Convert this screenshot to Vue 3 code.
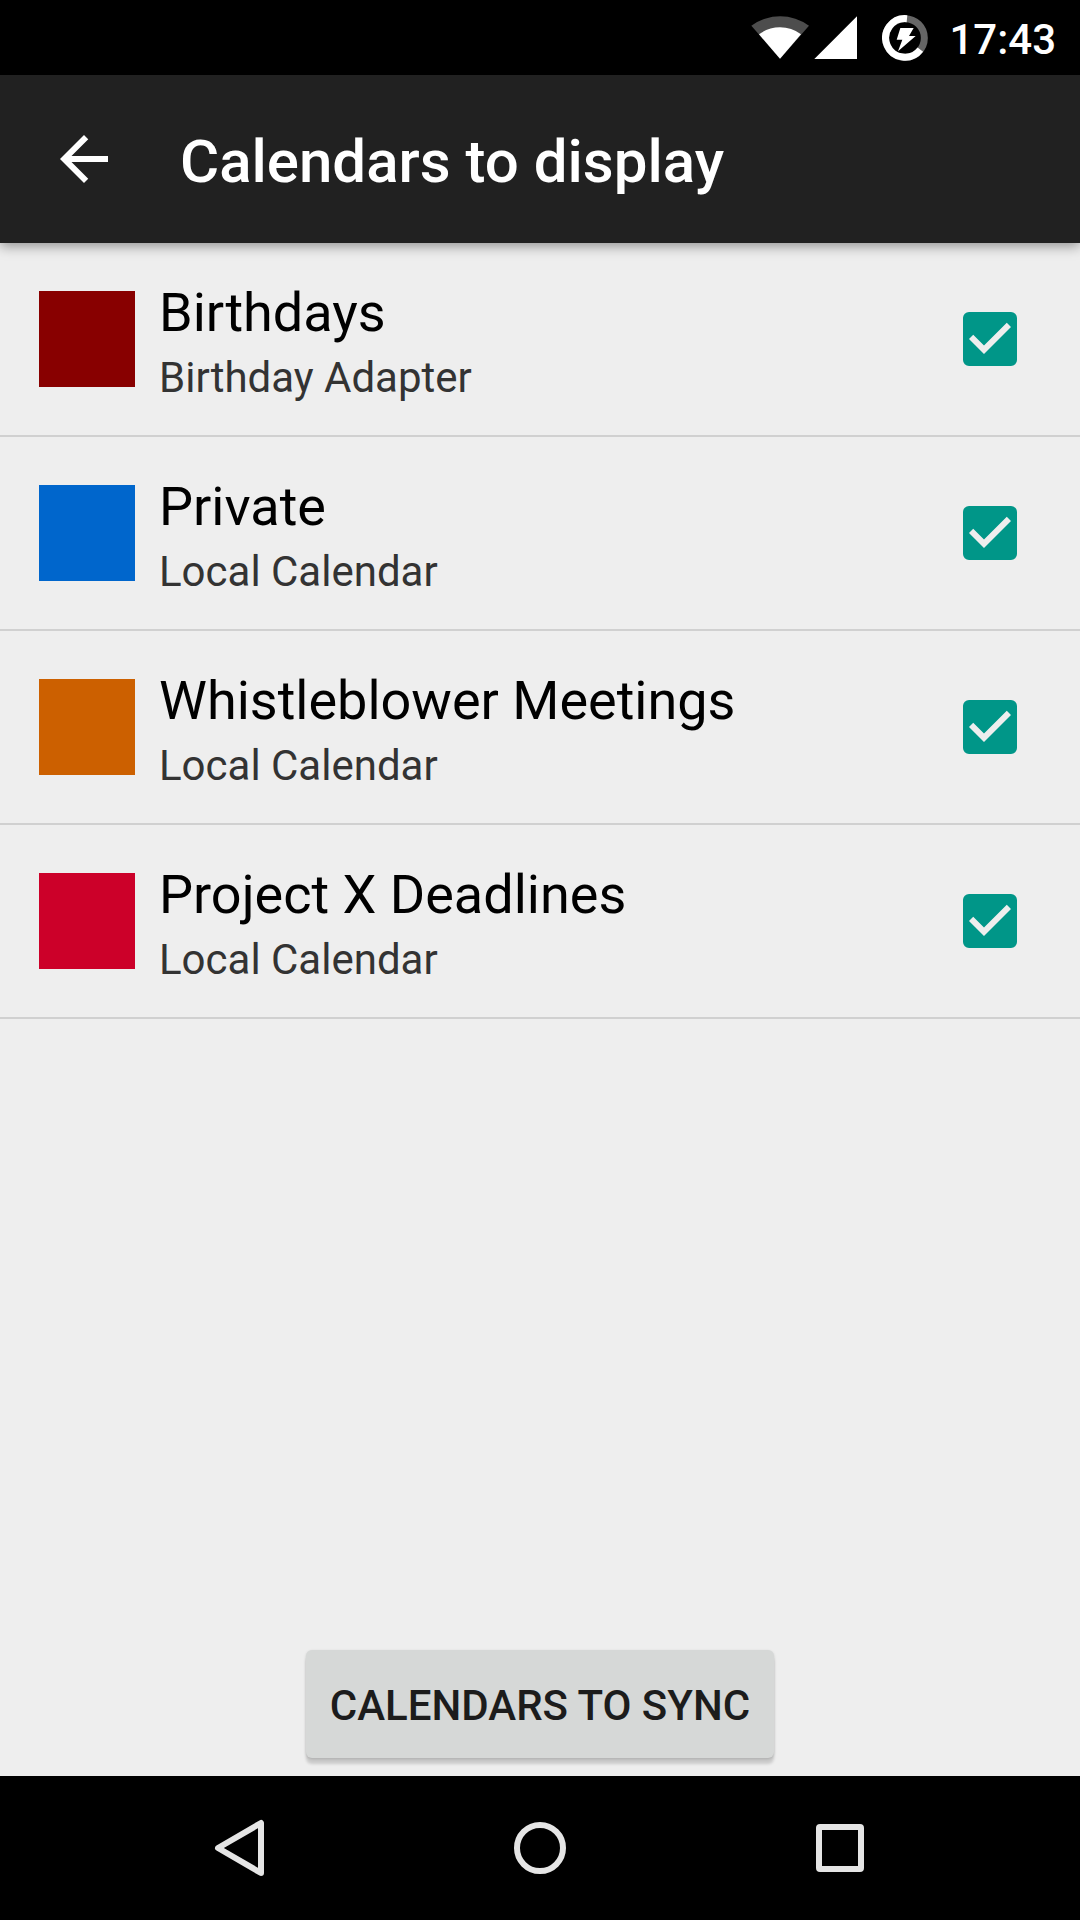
<script setup>
import { ref } from 'vue'

const calendars = ref([
  { id: 1, name: 'Birthdays', account: 'Birthday Adapter', color: '#880000', visible: true },
  { id: 2, name: 'Private', account: 'Local Calendar', color: '#0066cc', visible: true },
  { id: 3, name: 'Whistleblower Meetings', account: 'Local Calendar', color: '#cc6000', visible: true },
  { id: 4, name: 'Project X Deadlines', account: 'Local Calendar', color: '#cc0029', visible: true }
])
</script>

<template>
  <div class="screen">
    <div class="status-bar">
      <svg class="wifi" viewBox="33 48 174 129" aria-hidden="true">
        <path fill="#4d4d4d" d="M120 176L34 77A147 147 0 0 1 207 77Z" />
        <path fill="#fff" d="M120 176L57 103A105 105 0 0 1 183 103Z" />
      </svg>
      <svg class="signal" viewBox="222 48 129 129" aria-hidden="true">
        <path fill="#fff" d="M223 177L351 49V177Z" />
      </svg>
      <svg class="battery" viewBox="426 42 138 138" aria-hidden="true">
        <circle cx="495" cy="111" r="58" fill="none" stroke="#666" stroke-width="21" />
        <path d="M501 53A58 58 0 1 0 541 146" fill="none" stroke="#fff" stroke-width="21" />
        <path fill="#fff" d="M481 81H521L507 105H527L474 151L487 116H470Z" />
      </svg>
      <time class="clock">17:43</time>
    </div>

    <header class="app-bar">
      <button class="back" type="button" aria-label="Back">
        <svg viewBox="0 0 24 24" aria-hidden="true">
          <path fill="#fff" d="M20 11H7.83l5.59-5.59L12 4l-8 8 8 8 1.41-1.41L7.83 13H20v-2z" />
        </svg>
      </button>
      <h1>Calendars to display</h1>
    </header>

    <main class="content">
      <ul class="list">
        <li v-for="cal in calendars" :key="cal.id">
          <label class="row">
            <span class="swatch" :style="{ backgroundColor: cal.color }"></span>
            <span class="text">
              <span class="name">{{ cal.name }}</span>
              <span class="account">{{ cal.account }}</span>
            </span>
            <span class="check">
              <input v-model="cal.visible" type="checkbox" />
              <svg v-if="cal.visible" viewBox="3 3 18 18" aria-hidden="true">
                <path fill="#eee" d="M10 17l-5-5 1.41-1.41L10 14.17l7.59-7.59L19 8l-9 9z" />
              </svg>
            </span>
          </label>
        </li>
      </ul>
      <button class="sync" type="button">CALENDARS TO SYNC</button>
    </main>

    <nav class="nav-bar">
      <button type="button" aria-label="Back">
        <svg viewBox="0 0 72 72" aria-hidden="true">
          <path d="M57 11V61L14 36Z" />
        </svg>
      </button>
      <button type="button" aria-label="Home">
        <svg viewBox="0 0 72 72" aria-hidden="true">
          <circle cx="36" cy="36" r="23" />
        </svg>
      </button>
      <button type="button" aria-label="Recent apps">
        <svg viewBox="0 0 72 72" aria-hidden="true">
          <rect x="15" y="15" width="42" height="42" rx="1" />
        </svg>
      </button>
    </nav>
  </div>
</template>

<style>
body {
  background: #eee;
}
</style>

<style scoped>
.screen {
  display: flex;
  flex-direction: column;
  min-height: 100vh;
  background: #eee;
  font-family: Roboto, "Liberation Sans", sans-serif;
}

button {
  margin: 0;
  padding: 0;
  border: 0;
  background: none;
  font-family: inherit;
  cursor: pointer;
}

svg {
  display: block;
}

.status-bar {
  display: flex;
  align-items: center;
  justify-content: flex-end;
  height: 75px;
  padding-right: 24px;
  background: #000;
}

.wifi {
  width: 58px;
  height: 43px;
}

.signal {
  width: 43px;
  height: 43px;
  margin: 0 25px 0 5px;
}

.battery {
  width: 46px;
  height: 46px;
}

.clock {
  margin-left: 21px;
  padding-top: 4px;
  color: #fff;
  font-size: 42px;
  font-weight: 500;
  line-height: 49px;
}

.app-bar {
  display: flex;
  align-items: center;
  gap: 60px;
  height: 168px;
  padding: 0 48px;
  background: #212121;
  box-shadow: 0 3px 12px rgba(0, 0, 0, 0.4);
}

.back svg {
  width: 72px;
  height: 72px;
}

h1 {
  margin: 0;
  padding-top: 6px;
  color: #fff;
  font-size: 60px;
  font-weight: 500;
  line-height: 70px;
}

.content {
  display: flex;
  flex: 1;
  flex-direction: column;
  align-items: center;
  justify-content: space-between;
  padding-bottom: 18px;
}

.list {
  align-self: stretch;
  margin: 0;
  padding: 0;
  list-style: none;
}

.row {
  display: flex;
  align-items: center;
  gap: 24px;
  height: 192px;
  padding: 0 63px 0 39px;
  border-bottom: 2px solid #d0d0d0;
}

.swatch {
  flex: none;
  width: 96px;
  height: 96px;
}

.text {
  display: flex;
  flex: 1;
  flex-direction: column;
  gap: 9px;
  padding-top: 5px;
}

.name {
  color: #000;
  font-size: 54px;
  line-height: 63px;
}

.account {
  color: #333;
  font-size: 42px;
  line-height: 49px;
}

.check {
  display: grid;
  flex: none;
}

.check input,
.check svg {
  grid-area: 1 / 1;
  width: 54px;
  height: 54px;
}

.check input {
  margin: 0;
  border: 6px solid #757575;
  border-radius: 6px;
  appearance: none;
}

.check input:checked {
  border-color: #009688;
  background: #009688;
}

.check svg {
  pointer-events: none;
}

.sync {
  height: 108px;
  padding: 2px 24px 0;
  border-radius: 6px;
  background: #d6d8d7;
  box-shadow: 0 6px 3px rgba(0, 0, 0, 0.15), 0 1px 3px rgba(0, 0, 0, 0.15);
  color: #1c1c1c;
  font-size: 42px;
  font-weight: 500;
  line-height: 49px;
}

.nav-bar {
  display: flex;
  height: 144px;
  padding: 0 90px;
  background: #000;
}

.nav-bar button {
  display: flex;
  flex: 1;
  align-items: center;
  justify-content: center;
}

.nav-bar svg {
  width: 72px;
  height: 72px;
  fill: none;
  stroke: #e5e5e5;
  stroke-width: 6px;
  stroke-linejoin: round;
}
</style>
